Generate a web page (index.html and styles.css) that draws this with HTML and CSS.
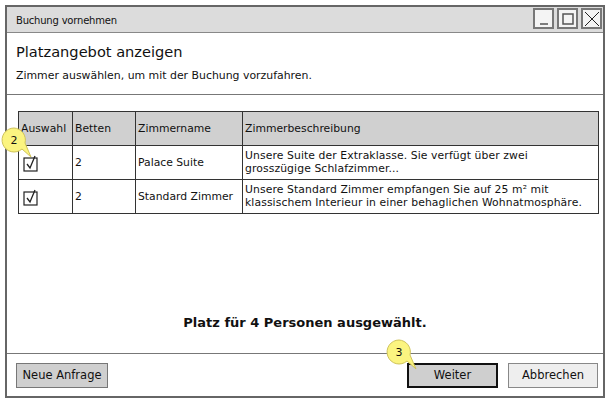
FILE: index.html
```html
<!DOCTYPE html>
<html lang="de">
<head>
<meta charset="utf-8">
<title>Buchung vornehmen</title>
<link rel="stylesheet" href="styles.css">
</head>
<body>
<div class="window">
  <div class="titlebar">
    <span class="title">Buchung vornehmen</span>
    <div class="winbtns">
      <span class="winbtn"><svg width="14" height="14" viewBox="0 0 14 14"><path d="M3 12 H11" stroke="#555" stroke-width="1.5" fill="none"/></svg></span>
      <span class="winbtn"><svg width="14" height="14" viewBox="0 0 14 14"><rect x="2" y="2" width="10" height="10" stroke="#555" stroke-width="1.5" fill="none"/></svg></span>
      <span class="winbtn"><svg width="16" height="16" viewBox="0 0 16 16"><path d="M1 1 L15 15 M15 1 L1 15" stroke="#222" stroke-width="1" fill="none"/></svg></span>
    </div>
  </div>
  <div class="head">
    <h1 class="heading">Platzangebot anzeigen</h1>
    <p class="sub">Zimmer auswählen, um mit der Buchung vorzufahren.</p>
  </div>
  <div class="content">
    <table class="rooms">
      <thead>
        <tr><th class="c1">Auswahl</th><th class="c2">Betten</th><th class="c3">Zimmername</th><th class="c4">Zimmerbeschreibung</th></tr>
      </thead>
      <tbody>
        <tr>
          <td class="check"><svg width="16" height="18" viewBox="0 0 16 18"><rect x="1" y="4" width="13" height="13" stroke="#222" stroke-width="1.2" fill="none"/><path d="M4 10 L7 14 L12 2" stroke="#222" stroke-width="1.3" fill="none"/></svg></td>
          <td>2</td><td>Palace Suite</td>
          <td class="desc">Unsere Suite der Extraklasse. Sie verfügt über zwei<br>grosszügige Schlafzimmer...</td>
        </tr>
        <tr>
          <td class="check"><svg width="16" height="18" viewBox="0 0 16 18"><rect x="1" y="4" width="13" height="13" stroke="#222" stroke-width="1.2" fill="none"/><path d="M4 10 L7 14 L12 2" stroke="#222" stroke-width="1.3" fill="none"/></svg></td>
          <td>2</td><td>Standard Zimmer</td>
          <td class="desc">Unsere Standard Zimmer empfangen Sie auf 25 m² mit<br>klassischem Interieur in einer behaglichen Wohnatmosphäre.</td>
        </tr>
      </tbody>
    </table>
    <p class="msg">Platz für 4 Personen ausgewählt.</p>
  </div>
  <div class="footer">
    <button class="btn btn-gray">Neue Anfrage</button>
    <span class="spacer"></span>
    <button class="btn btn-primary">Weiter</button>
    <button class="btn btn-light">Abbrechen</button>
  </div>
</div>
<div class="callout callout-2"><svg width="34" height="34" viewBox="0 0 34 34"><path d="M13 1 A12 12 0 1 0 21 22 L30 30 L24 16 A12 12 0 0 0 13 1 Z" fill="#fbf480" stroke="#cfc35a" stroke-width="1"/><text x="13" y="17" text-anchor="middle" class="cnum">2</text></svg></div>
<div class="callout callout-3"><svg width="34" height="34" viewBox="0 0 34 34"><path d="M13 1 A12 12 0 1 0 21 22 L30 30 L24 16 A12 12 0 0 0 13 1 Z" fill="#fbf480" stroke="#cfc35a" stroke-width="1"/><text x="13" y="17" text-anchor="middle" class="cnum">3</text></svg></div>
</body>
</html>
```

FILE: styles.css
```css
* { box-sizing: border-box; }
html, body { margin: 0; padding: 0; background: #fff; }
body {
  font-family: "DejaVu Sans", "Liberation Sans", sans-serif;
  color: #111;
  position: relative;
  width: 611px;
  height: 403px;
  overflow: hidden;
}
.window {
  margin: 5px 0 0 5px;
  width: 600px;
  height: 393px;
  border: 2px solid #666;
  display: flex;
  flex-direction: column;
}
.titlebar {
  height: 26px;
  background: #dcdcdc;
  border-bottom: 1px solid #888;
  display: flex;
  align-items: center;
  padding-left: 9px;
}
.title { font-size: 10px; letter-spacing: -0.2px; flex: 1; padding-top: 1px; }
.winbtns { display: flex; gap: 3px; padding-right: 1px; align-self: flex-start; margin-top: 1px; }
.winbtn {
  width: 21px; height: 21px;
  border: 2px solid #777;
  background: #f4f4f4;
  display: flex; align-items: center; justify-content: center;
}
.head {
  height: 62px;
  border-bottom: 1px solid #777;
  padding: 9px 9px 0;
}
.heading { margin: 0; font-size: 14.6px; font-weight: normal; line-height: 20px; }
.sub { margin: 7px 0 0; font-size: 10.9px; line-height: 14px; }
.content {
  flex: 1;
  border-bottom: 1px solid #777;
  padding: 16px 0 0 11px;
}
.rooms {
  border-collapse: collapse;
  width: 581px;
  font-size: 10.8px;
  table-layout: fixed;
}
.rooms th, .rooms td {
  border: 1.5px solid #333;
  height: 34px;
  padding: 0 2px;
  text-align: left;
  vertical-align: middle;
  font-weight: normal;
  line-height: 13px;
}
.rooms th { background: #d0d0d0; }
.rooms td.desc { white-space: nowrap; letter-spacing: 0.1px; line-height: 12.5px; }
.c1 { width: 54px; }
.c2 { width: 63px; }
.c3 { width: 107px; }
.check { padding-left: 4px !important; }
.check svg { display: block; }
.msg {
  margin: 101px 0 0;
  text-align: center;
  font-weight: bold;
  font-size: 13px;
  padding-right: 11px;
}
.footer {
  height: 42px;
  display: flex;
  align-items: center;
  padding: 0 5px 0 9px;
  gap: 10px;
}
.spacer { flex: 1; }
.btn {
  font-family: inherit;
  font-size: 11.5px;
  height: 25px;
  color: #111;
  border-radius: 0;
  padding: 0;
}
.btn-gray { width: 92px; background: #cfcfcf; border: 1.5px solid #777; }
.btn-primary { width: 91px; background: #cfcfcf; border: 2px solid #111; }
.btn-light { width: 90px; background: #eeeeee; border: 1.5px solid #888; }
.callout { position: absolute; width: 34px; height: 34px; }
.callout svg { display: block; }
.callout-2 { left: 1px; top: 127px; }
.callout-3 { left: 386px; top: 339px; }
.cnum { font-family: "DejaVu Sans", sans-serif; font-size: 11px; fill: #111; }
```
